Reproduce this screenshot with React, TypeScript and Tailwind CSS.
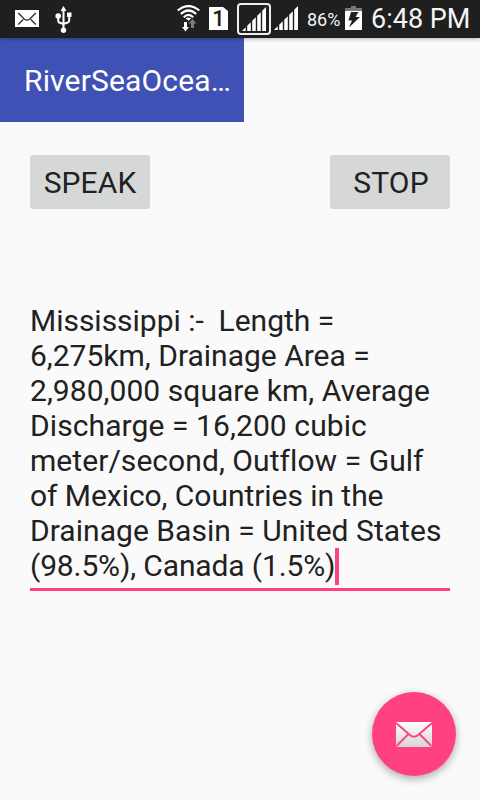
const lines = [
  { text: 'Mississippi :-  Length =', tracking: 'tracking-[-0.02px]' },
  { text: '6,275km, Drainage Area =', tracking: 'tracking-[0px]' },
  { text: '2,980,000 square km, Average', tracking: 'tracking-[0.05px]' },
  { text: 'Discharge = 16,200 cubic', tracking: 'tracking-[0.09px]' },
  { text: 'meter/second, Outflow = Gulf', tracking: 'tracking-[0.06px]' },
  { text: 'of Mexico, Countries in the', tracking: 'tracking-[-0.05px]' },
  { text: 'Drainage Basin = United States', tracking: 'tracking-[0.04px]' },
  { text: '(98.5%), Canada (1.5%)', tracking: 'tracking-[-0.13px]' },
];

function MailIcon() {
  return (
    <svg className="h-[17px] w-6" viewBox="0 0 24 17">
      <path d="M0 0h24v17H0z" fill="#fff" />
      <path d="M3.200 3l6.300 6.200q2.500 1.800 5 0L20.800 3M3.200 14.500l5-5M20.800 14.500l-5-5" fill="none" stroke="#303030" strokeWidth="1.400" />
    </svg>
  );
}

function UsbIcon() {
  return (
    <svg className="h-[27px] w-[18px]" viewBox="0 0 18 27" fill="#fff">
      <path d="M8.500 0l3 5h-6z" />
      <circle cx="3.200" cy="10" r="2.800" />
      <path d="M12 6.500h4.500V11H12z" />
      <circle cx="8.500" cy="24.200" r="2.700" />
      <path d="M8.500 4v19M3.200 11v3.500q0 1.800 1.500 2.200l3.800 1.300 4.200-1.500q1.500-.6 1.500-2V10" fill="none" stroke="#fff" strokeWidth="2" />
    </svg>
  );
}

function WifiIcon() {
  return (
    <svg className="h-[27px] w-[23px]" viewBox="0 0 23 27">
      <g fill="none" stroke="#fff" strokeWidth="2.200">
        <path d="M.7 5.500Q11.500-3.500 22.300 5.500" />
        <path d="M3.800 9Q11.500 2 19.200 9" />
        <path d="M6.800 12.200Q11.500 7.500 16.200 12.200" />
      </g>
      <path d="M8.800 13.500q2.700-2 5.400 0l-2.700 2.300z" fill="#fff" />
      <path d="M7 17h3v5h2l-3.500 4.500L5 22h2z" fill="#fff" />
      <path d="M14 23h3v-4.500h2.500l-4-4.500-4 4.500H14z" fill="#7c7c7c" />
    </svg>
  );
}

function SignalIcon() {
  return (
    <svg className="h-6 w-6" viewBox="0 0 24 24" fill="#fff">
      <path d="M0 24l3.700-3.700V24zM5.200 24v-5.200L8.800 15.200V24zM10.200 24V13.800l3.600-3.600V24zM15.200 24V8.800l3.600-3.600V24zM20.200 24V3.800L24 0v24z" />
    </svg>
  );
}

function BatteryIcon() {
  return (
    <svg className="h-6 w-[17px]" viewBox="0 0 17 24">
      <path d="M6 0h5v2h6v3H0V2h6z" fill="#777" />
      <path d="M0 5h17v19H0z" fill="#fff" />
      <path d="M6 6h7.500l-3 5H15L4 21.500l3-7H3.500z" fill="#1e1e1e" />
    </svg>
  );
}

function StatusBar() {
  return (
    <header className="relative flex h-[38px] bg-[#1f1f1f] text-[#f5f5f5] shadow-[0_1px_4px_rgba(0,0,0,0.3)]">
      <div className="ml-[15px] mt-[10px]"><MailIcon /></div>
      <div className="ml-4 mt-[6px]"><UsbIcon /></div>
      <div className="ml-[104px] mt-[5px]"><WifiIcon /></div>
      <div className="ml-[9px] mt-[7px] flex h-[23px] w-[19px] items-center justify-center bg-white text-[22px] font-medium leading-none text-[#1f1f1f] [clip-path:polygon(0_0,14px_0,19px_4px,19px_100%,0_100%)]">
        1
      </div>
      <div className="ml-[9px] mt-[3px] flex h-8 w-[34px] items-center justify-center rounded-[4px] border-2 border-[#eee]">
        <SignalIcon />
      </div>
      <div className="ml-[3px] mt-[6px]"><SignalIcon /></div>
      <span className="ml-[9px] mt-[10px] w-[38px] whitespace-nowrap text-[18px] leading-5">86%</span>
      <div className="mt-[6px]"><BatteryIcon /></div>
      <span className="ml-[9px] mt-[4px] whitespace-nowrap text-[27px] leading-[30px]">6:48 PM</span>
    </header>
  );
}

export default function App() {
  return (
    <div className="flex h-[800px] w-[480px] flex-col overflow-hidden bg-[#fafafa] font-['Roboto',sans-serif] text-[#212121]">
      <StatusBar />
      <h1 className="h-[84px] w-[244px] whitespace-nowrap bg-[#3f51b5] pl-6 pt-px text-[30px] leading-[84px] tracking-[0.16px] text-white">
        RiverSeaOcea…
      </h1>

      <div className="mt-[33px] flex justify-between px-[30px]">
        <button className="h-[54px] w-[120px] rounded-[3px] bg-[#d6d8d7] pt-px text-[30px] leading-[53px] tracking-[0.1px]">SPEAK</button>
        <button className="h-[54px] w-[120px] rounded-[3px] bg-[#d6d8d7] pl-[2px] pt-px text-[30px] leading-[53px] tracking-[0.2px]">STOP</button>
      </div>

      <div className="mx-[30px] mt-[94px] h-[288px] border-b-[3px] border-[#ff4081] text-[30px] leading-[35px] [font-variant-ligatures:none]">
        {lines.map(({ text, tracking }, i) => (
          <div key={text} className="flex h-[35px] whitespace-pre">
            <span className={tracking}>{text}</span>
            {i === lines.length - 1 && <span className="h-[37px] w-1 bg-[#ff4081]" />}
          </div>
        ))}
      </div>

      <button className="mb-6 ml-auto mr-6 mt-auto flex size-[84px] shrink-0 items-center justify-center rounded-full bg-[#ff4081] shadow-[0_3px_9px_rgba(0,0,0,0.32)]">
        <svg className="mt-px h-[25px] w-9" viewBox="0 0 36 25">
          <defs>
            <linearGradient id="paper" x1="0" y1="0" x2="0" y2="1">
              <stop offset="0" stopColor="#fff" />
              <stop offset="1" stopColor="#d5d5d5" />
            </linearGradient>
          </defs>
          <rect width="36" height="25" rx="1" fill="url(#paper)" />
          <path d="M0 1l14.500 12.500q3.500 2.500 7 0L36 1M.5 24L12.500 12M35.500 24L23.500 12" fill="none" stroke="#ff4081" strokeWidth="1.900" />
        </svg>
      </button>
    </div>
  );
}
